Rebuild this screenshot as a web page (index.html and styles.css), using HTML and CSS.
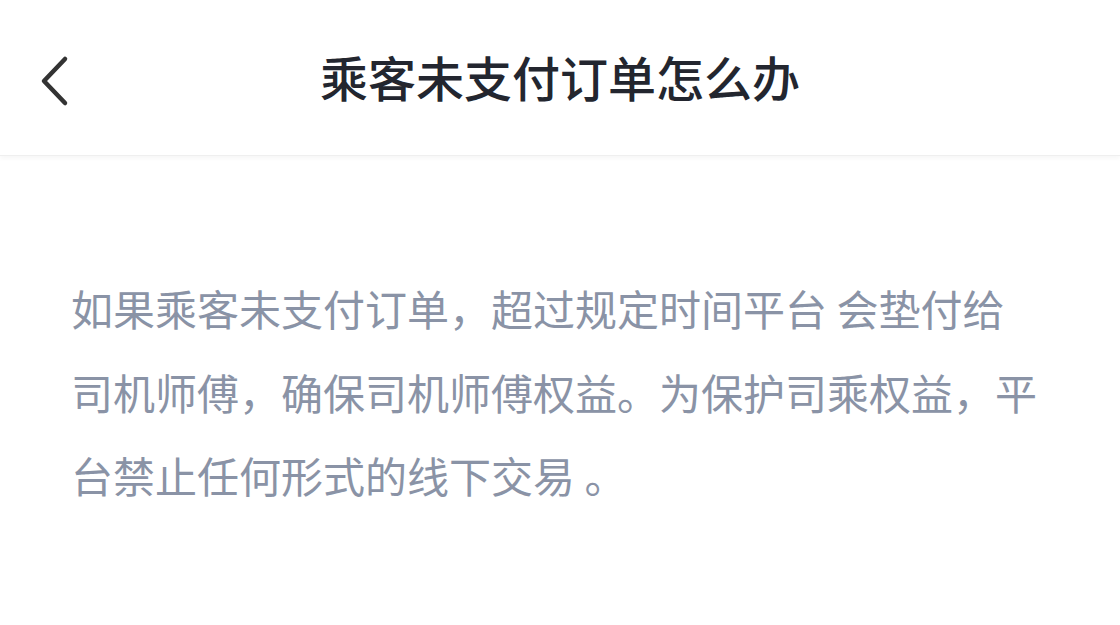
FILE: index.html
```html
<!DOCTYPE html>
<html lang="zh-CN">
<head>
  <meta charset="UTF-8" />
  <meta name="viewport" content="width=device-width, initial-scale=1.0" />
  <title>乘客未支付订单怎么办</title>
  <link rel="stylesheet" href="styles.css">
</head>
<body>
  <div class="page">
    <header class="nav-bar">
      <span class="back-btn">
        <svg width="32" height="52" viewBox="0 0 32 52">
          <path d="M27 4 L6 26 L27 48" fill="none" stroke="#333333" stroke-width="4.5" stroke-linecap="round" stroke-linejoin="round"/>
        </svg>
      </span>
      <h1 class="nav-title">乘客未支付订单怎么办</h1>
    </header>

    <div class="article">
      <p>如果乘客未支付订单，超过规定时间平台 会垫付给司机师傅，确保司机师傅权益。为保护司乘权益，平台禁止任何形式的线下交易 。</p>
    </div>
  </div>
</body>
</html>
```

FILE: styles.css
```css
body, html {
  height: 100%;
  margin: 0;
  font-family: "Noto Sans CJK SC", "Noto Sans", sans-serif;
  background-color: #ffffff;
}
.page {
  height: 100%;
  display: flex;
  flex-direction: column;
}
.nav-bar {
  position: relative;
  height: 156px;
  flex-shrink: 0;
  display: flex;
  align-items: center;
  justify-content: center;
  background-color: #ffffff;
  border-bottom: 1px solid #efefef;
  box-shadow: 0px 3px 4px 0px rgba(0, 0, 0, 0.03);
  box-sizing: border-box;
}
.back-btn {
  position: absolute;
  left: 38px;
  top: 55px;
  display: flex;
}
.nav-title {
  margin: 0 0 4px 0;
  font-size: 48px;
  font-weight: 500;
  color: #23262f;
}
.article {
  padding: 110px 76px 0 71px;
}
.article p {
  margin: 0;
  font-size: 42px;
  line-height: 83.5px;
  color: #8a93a6;
}
```
